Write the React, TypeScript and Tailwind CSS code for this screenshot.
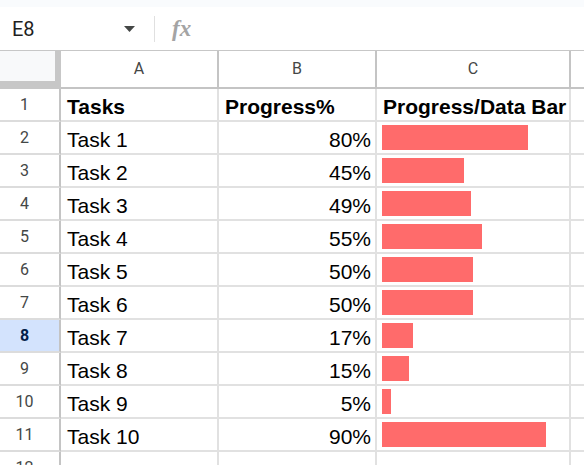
const rows: [string, number][] = [
  ['Task 1', 80],
  ['Task 2', 45],
  ['Task 3', 49],
  ['Task 4', 55],
  ['Task 5', 50],
  ['Task 6', 50],
  ['Task 7', 17],
  ['Task 8', 15],
  ['Task 9', 5],
  ['Task 10', 90],
];

// px for a 100% bar in column C
const BAR_MAX = 182;

function RowNum({ n, active }: { n: number; active?: boolean }) {
  return (
    <div
      className={
        active
          ? "h-[33px] border-r-2 border-b-2 border-r-[#c4c4c4] border-b-[#dcdcdc] bg-[#d3e3fd] flex items-center justify-center pr-[10px] font-['Roboto',sans-serif] text-[16px] font-bold text-[#041e49]"
          : "h-[33px] border-r-2 border-b-2 border-r-[#c4c4c4] border-b-[#dcdcdc] flex items-center justify-center pr-[10px] font-['Roboto',sans-serif] text-[16px] text-[#444746]"
      }
    >
      {n}
    </div>
  );
}

function Cell({ children, right, bold }: { children?: React.ReactNode; right?: boolean; bold?: boolean }) {
  return (
    <div
      className={
        'h-[33px] border-r-2 border-b-2 border-[#e1e1e1] flex items-end pb-[3px] text-[21px] leading-none text-black whitespace-nowrap overflow-hidden ' +
        (right ? 'justify-end pr-[4px] ' : 'pl-[6px] ') +
        (bold ? 'font-bold' : '')
      }
    >
      {children}
    </div>
  );
}

function ColHead({ label }: { label?: string }) {
  return (
    <div className="h-[38px] border-r-2 border-b-2 border-[#c4c4c4] flex items-center justify-center font-['Roboto',sans-serif] text-[16px] text-[#444746]">
      {label}
    </div>
  );
}

export default function App() {
  return (
    <div className="w-[584px] h-[465px] overflow-hidden bg-white font-['Liberation_Sans',Arial,sans-serif]">
      <div className="h-[7px] bg-[#f9fbfd]" />

      {/* formula bar */}
      <div className="h-[44px] flex items-center border-b border-[#c7c7c7]">
        <div className="w-[154px] flex items-center justify-between pl-[12px] pr-[19px]">
          <span className="font-['Roboto',sans-serif] text-[20px] text-[#1f1f1f]">E8</span>
          <svg width="11" height="6" viewBox="0 0 11 6">
            <polygon points="0,0 11,0 5.5,6" fill="#444746" />
          </svg>
        </div>
        <div className="w-px h-[26px] bg-[#e0e0e0]" />
        <span className="ml-[17px] font-['Liberation_Serif',serif] italic font-bold text-[23px] text-[#a4a4a4] leading-none">
          fx
        </span>
      </div>

      {/* sheet grid */}
      <div className="grid grid-cols-[61px_158px_158px_194px_1fr]">
        <div className="h-[38px] bg-[#c7c7c7] flex items-start">
          <div className="w-[55px] h-[30px] bg-[#f8f9fa]" />
        </div>
        <ColHead label="A" />
        <ColHead label="B" />
        <ColHead label="C" />
        <div className="h-[38px] border-b-2 border-[#c4c4c4]" />

        <RowNum n={1} />
        <Cell bold>Tasks</Cell>
        <Cell bold>Progress%</Cell>
        <Cell bold>Progress/Data Bar</Cell>
        <div className="h-[33px] border-b-2 border-[#e1e1e1]" />

        {rows.map(([task, pct], i) => (
          <div key={task} className="contents">
            <RowNum n={i + 2} active={i + 2 === 8} />
            <Cell>{task}</Cell>
            <Cell right>{pct}%</Cell>
            <div className="h-[33px] border-r-2 border-b-2 border-[#e1e1e1] pt-[3px] pl-[5px]">
              <div className="h-[25px] bg-[#ff6b6b]" style={{ width: Math.round((pct / 100) * BAR_MAX) }} />
            </div>
            <div className="h-[33px] border-b-2 border-[#e1e1e1]" />
          </div>
        ))}

        <RowNum n={12} />
        <Cell />
        <Cell />
        <Cell />
        <div className="h-[33px] border-b-2 border-[#e1e1e1]" />
      </div>
    </div>
  );
}
